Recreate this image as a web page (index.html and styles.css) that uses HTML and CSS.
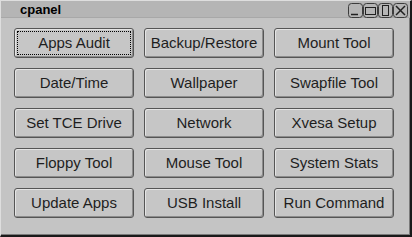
FILE: index.html
```html
<!DOCTYPE html>
<html lang="en">
<head>
    <meta charset="UTF-8">
    <title>cpanel</title>
    <link rel="stylesheet" href="styles.css">
</head>
<body>
    <div class="window">
        <div class="titlebar">
            <span class="title">cpanel</span>
            <div class="wbtns">
                <svg class="wbtn" width="15" height="15" viewBox="0 0 15 15"><rect x="0.5" y="0.5" width="14" height="14" rx="3" /><line x1="3" y1="11.5" x2="10" y2="11.5" /></svg>
                <svg class="wbtn" width="15" height="15" viewBox="0 0 15 15"><rect x="0.5" y="0.5" width="14" height="14" rx="3" /><rect class="in" x="2.5" y="4.5" width="10" height="7" /></svg>
                <svg class="wbtn" width="15" height="15" viewBox="0 0 15 15"><rect x="0.5" y="0.5" width="14" height="14" rx="3" /><rect class="in" x="4.5" y="2.5" width="6" height="10" /></svg>
                <svg class="wbtn" width="15" height="15" viewBox="0 0 15 15"><rect x="0.5" y="0.5" width="14" height="14" rx="3" /><line x1="3" y1="3" x2="12" y2="12" /><line x1="12" y1="3" x2="3" y2="12" /></svg>
            </div>
        </div>
        <div class="panel">
            <button class="btn focus"><span>Apps Audit</span></button>
            <button class="btn"><span>Backup/Restore</span></button>
            <button class="btn"><span>Mount Tool</span></button>
            <button class="btn"><span>Date/Time</span></button>
            <button class="btn"><span>Wallpaper</span></button>
            <button class="btn"><span>Swapfile Tool</span></button>
            <button class="btn"><span>Set TCE Drive</span></button>
            <button class="btn"><span>Network</span></button>
            <button class="btn"><span>Xvesa Setup</span></button>
            <button class="btn"><span>Floppy Tool</span></button>
            <button class="btn"><span>Mouse Tool</span></button>
            <button class="btn"><span>System Stats</span></button>
            <button class="btn"><span>Update Apps</span></button>
            <button class="btn"><span>USB Install</span></button>
            <button class="btn"><span>Run Command</span></button>
        </div>
    </div>
</body>
</html>
```

FILE: styles.css
```css
*{
    margin: 0;
    padding: 0;
    box-sizing: border-box;
}

body{
    width: 412px;
    height: 237px;
    background-color: #c4c4c4;
    font-family: "Liberation Sans", Arial, sans-serif;
}

/* window frame */
.window{
    width: 412px;
    height: 237px;
    display: flex;
    flex-direction: column;
    background-color: #c4c4c4;
    border-left: 1px solid #dedede;
    border-top: 1px solid #dedede;
    border-right: 2px solid #1a1a1a;
    border-bottom: 2px solid #1a1a1a;
    box-shadow: inset -1px -1px 0 #7a7a7a;
}

.titlebar{
    height: 17px;
    flex: none;
    display: flex;
    align-items: center;
    justify-content: space-between;
    background-color: #b5b5b5;
    border-bottom: 1px solid #a8a8a8;
    padding-left: 19px;
    padding-right: 2px;
}

.title{
    font-size: 13px;
    font-weight: bold;
    color: #000;
    padding-top: 1px;
}

.wbtns{
    display: flex;
    padding-top: 2px;
}

.wbtn rect{
    fill: none;
    stroke: #3c3c3c;
    stroke-width: 1;
}
.wbtn rect.in{
    stroke: #202020;
}
.wbtn line{
    stroke: #202020;
    stroke-width: 1.5;
}

/* button grid */
.panel{
    display: grid;
    grid-template-columns: repeat(3, 120px);
    grid-auto-rows: 30px;
    column-gap: 10px;
    row-gap: 10px;
    padding: 10px 0 0 13px;
}

.btn{
    font-family: "Liberation Sans", Arial, sans-serif;
    font-size: 15px;
    color: #1e1e1e;
    background-color: #c6c6c6;
    border: 1px solid #555;
    border-radius: 3px;
    box-shadow: inset 1px 1px 0 #e4e4e4, inset -1px -1px 0 #8c8c8c;
    display: flex;
    align-items: center;
    justify-content: center;
    padding-bottom: 1px;
}

.btn.focus{
    position: relative;
}
.btn.focus::after{
    content: "";
    position: absolute;
    left: 2px;
    top: 2px;
    right: 2px;
    bottom: 2px;
    border: 1px dotted #000;
}
```
